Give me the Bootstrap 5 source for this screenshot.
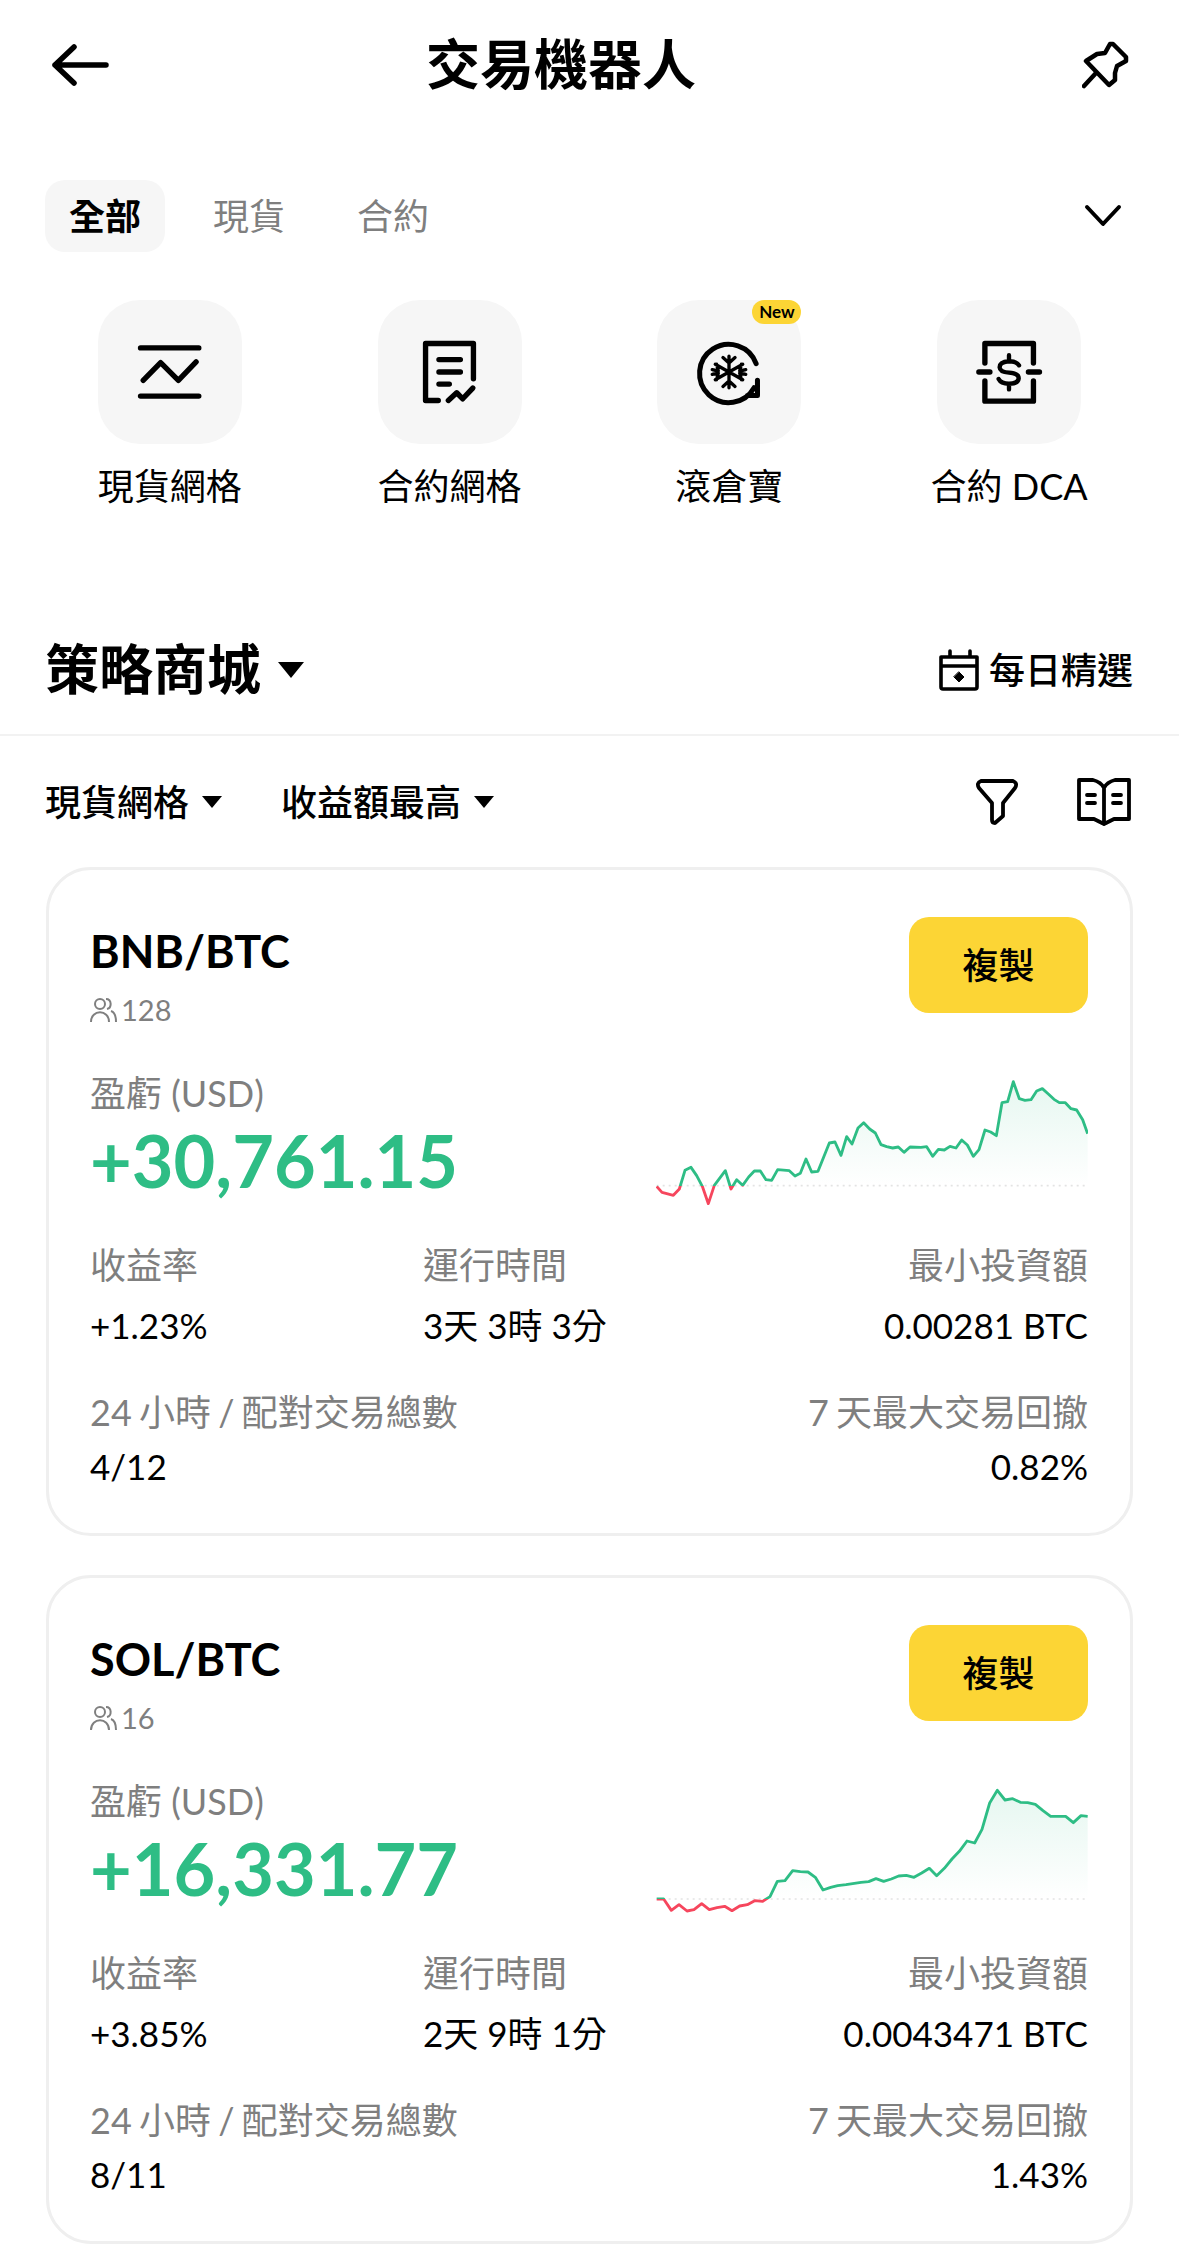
<!DOCTYPE html>
<html lang="zh-Hant">

<head>
  <meta charset="UTF-8" />
  <meta name="viewport" content="width=device-width, initial-scale=1" />
  <title>交易機器人</title>
  <link href="https://cdn.jsdelivr.net/npm/bootstrap@5.3.0/dist/css/bootstrap.min.css" rel="stylesheet">
  <style>
    body {
      font-family: Lato, "Noto Sans CJK TC", sans-serif;
      background-color: #fff;
      color: #000;
      width: 1179px;
      height: 2262px;
      overflow: hidden;
    }

    svg {
      display: block;
      flex: none;
    }

    .ink {
      fill: none;
      stroke: #000;
      stroke-linecap: round;
      stroke-linejoin: round;
    }

    .top-bar {
      height: 130px;
      padding: 0 43px 0 52px;
    }

    .top-title {
      font-size: 54px;
      font-weight: 700;
      line-height: 1;
      margin: 0 0 0 316px;
    }

    .tab-row {
      height: 72px;
      margin-top: 50px;
      padding: 0 57px 0 45px;
      font-size: 36px;
      color: #7f7f7f;
    }

    .tab-item {
      width: 120px;
      margin-right: 24px;
      height: 72px;
      line-height: 72px;
      border-radius: 20px;
      text-align: center;
    }

    .tab-item.on {
      background: #f6f6f6;
      color: #000;
      font-weight: 700;
    }

    .tool-row {
      margin-top: 48px;
      padding: 0 30px;
    }

    .tool-item {
      width: 280px;
    }

    .tool-tile {
      width: 144px;
      height: 144px;
      border-radius: 42px;
      background: #f6f6f6;
    }

    .new-tag {
      position: absolute;
      top: 0;
      right: 0;
      width: 49px;
      height: 24px;
      line-height: 23px;
      border-radius: 12px;
      background: #fcd535;
      font-size: 17px;
      font-weight: 700;
      text-align: center;
    }

    .tool-name {
      margin-top: 19px;
      font-size: 36px;
      line-height: 46px;
      white-space: nowrap;
    }

    .shop-head {
      margin-top: 129px;
      height: 64px;
      padding: 0 46px 0 45px;
    }

    .shop-title {
      font-size: 54px;
      font-weight: 700;
      line-height: 64px;
      margin: 0;
    }

    .daily-link {
      font-size: 36px;
      font-weight: 500;
    }

    .shop-line {
      height: 2px;
      margin-top: 32px;
      background: #f2f2f2;
    }

    .filter-row {
      height: 131px;
      padding: 0 48px 0 45px;
      font-size: 36px;
      font-weight: 500;
    }

    .caret-a {
      margin: 0 58px 0 12px;
    }

    .caret-b {
      margin-left: 12px;
    }

    .filter-icon {
      margin-left: auto;
      margin-right: 10px;
    }

    .bot-card {
      width: 1087px;
      height: 669px;
      margin: 0 46px 39px;
      padding: 47px 42px 0 41px;
      border: 3px solid #efefef;
      border-radius: 45px;
    }

    .pair-name {
      font-size: 45px;
      font-weight: 700;
      line-height: 54px;
      margin: 7px 0 0;
    }

    .pair-users {
      margin-top: 17px;
      color: #7f7f7f;
      font-size: 29px;
      line-height: 30px;
    }

    .copy-btn {
      width: 179px;
      height: 96px;
      border: 0;
      border-radius: 20px;
      background: #fcd535;
      color: #000;
      font-size: 36px;
      font-weight: 500;
    }

    .pnl-box {
      margin-top: 46px;
      height: 137px;
    }

    .pnl-chart {
      margin-top: 2px;
    }

    .gray-label {
      color: #7f7f7f;
      font-size: 36px;
      line-height: 44px;
      white-space: nowrap;
    }

    .pnl-value {
      color: #2ebd85;
      font-size: 72px;
      font-weight: 700;
      line-height: 84px;
      margin-top: 3px;
    }

    .stat-row {
      margin-top: 35px;
    }

    .stat-row.last {
      margin-top: 44px;
    }

    .stat-row.last .gray-label {
      word-spacing: -2px;
    }

    .stat-first {
      width: 333px;
    }

    .stat-value {
      font-size: 35px;
      line-height: 42px;
      margin-top: 17px;
      white-space: nowrap;
    }

    .last .stat-value {
      margin-top: 11px;
    }
  </style>
</head>

<body>
  <header class="top-bar d-flex align-items-center">
    <svg class="ink" width="58" height="44" viewBox="0 0 58 44" stroke-width="5.5">
      <path d="M22 4 3 22 22 40M3 22H54" />
    </svg>
    <h1 class="top-title">交易機器人</h1>
    <svg class="ink ms-auto" width="54" height="52" viewBox="22 9 54 52" stroke-width="4.5">
      <path d="M26 31 37 24 45 23 50 14 53 14 66 27 66 31 57 36 55 43 55 50 49 55ZM36 43 24 56" />
    </svg>
  </header>

  <div class="tab-row d-flex align-items-center">
    <div class="tab-item on">全部</div>
    <div class="tab-item">現貨</div>
    <div class="tab-item">合約</div>
    <svg class="ink ms-auto" width="38" height="24" viewBox="0 0 38 24" stroke-width="4">
      <path d="M3 3 19 20 35 3" />
    </svg>
  </div>

  <div class="tool-row d-flex">
    <div class="tool-item d-flex flex-column align-items-center">
      <div class="tool-tile">
        <svg class="ink" width="144" height="144" viewBox="115 60 430 430" stroke-width="16">
          <path d="M242 203H416M242 347H416M250 300 302 247 355 300 408 245" />
        </svg>
      </div>
      <div class="tool-name">現貨網格</div>
    </div>
    <div class="tool-item d-flex flex-column align-items-center">
      <div class="tool-tile">
        <svg class="ink" width="144" height="144" viewBox="955 60 430 430" stroke-width="16">
          <path d="M1135 360H1097V190H1240V295M1137 238H1201M1137 275H1201M1137 311H1168M1165 360 1190 337 1208 355 1238 323" />
        </svg>
      </div>
      <div class="tool-name">合約網格</div>
    </div>
    <div class="tool-item d-flex flex-column align-items-center">
      <div class="tool-tile position-relative">
        <svg class="ink" width="144" height="144" viewBox="115 60 430 430" stroke-width="15">
          <path d="M411 250A87 87 0 1 0 405 322M415 300V345H385" />
          <path d="M330 228V322M289 252 371 298M289 298 371 252M312 232 330 248 348 232M312 318 330 302 348 318M280 268 298 272 293 252M380 282 362 278 367 298M280 282 298 278 293 298M380 268 362 272 367 252" stroke-width="10" />
        </svg>
        <span class="new-tag">New</span>
      </div>
      <div class="tool-name">滾倉寶</div>
    </div>
    <div class="tool-item d-flex flex-column align-items-center">
      <div class="tool-tile">
        <svg class="ink" width="144" height="144" viewBox="952 60 430 430" stroke-width="16">
          <path d="M1095 248V190H1240V248M1095 302V362H1240V302M1077 275H1110M1225 275H1258" />
          <path d="M1197 255Q1190 243 1167 243 1139 245 1139 261 1140 275 1167 277 1196 279 1196 294 1194 310 1167 310 1143 310 1136 296M1167 225V243M1167 310V327" stroke-width="13" />
        </svg>
      </div>
      <div class="tool-name">合約 DCA</div>
    </div>
  </div>

  <div class="shop-head d-flex align-items-center justify-content-between">
    <div class="d-flex align-items-center gap-3">
      <h2 class="shop-title">策略商城</h2>
      <svg width="28" height="18" viewBox="0 0 28 18"><path d="M1 1H27L14 17Z" /></svg>
    </div>
    <div class="daily-link d-flex align-items-center gap-2">
      <svg class="ink" width="44" height="44" viewBox="0 0 44 44" stroke-width="3.6">
        <path d="M4 9H40V39Q40 41 38 41H6Q4 41 4 39ZM4 18H40M13 3V9M33 3V9" />
        <path d="M22 24 27 29 22 34 17 29Z" fill="#000" stroke-width="1" />
      </svg>
      <span>每日精選</span>
    </div>
  </div>
  <div class="shop-line"></div>

  <div class="filter-row d-flex align-items-center">
    <span>現貨網格</span>
    <svg class="caret-a" width="22" height="14" viewBox="0 0 22 14"><path d="M1 1H21L11 13Z" /></svg>
    <span>收益額最高</span>
    <svg class="caret-b" width="22" height="14" viewBox="0 0 22 14"><path d="M1 1H21L11 13Z" /></svg>
    <svg class="ink filter-icon" width="44" height="48" viewBox="0 0 44 48" stroke-width="3.8">
      <path d="M6 3H38Q43 5 40 10L28 25V38L20 45Q17 45 17 42V25L4 10Q1 5 6 3Z" />
    </svg>
    <svg class="ink ms-5" width="54" height="50" viewBox="0 0 54 50" stroke-width="3.8">
      <path d="M2 3H16Q24 5 27 11 30 5 38 3H52V42H37L27 47 17 42H2ZM27 11V46M10 18H18M10 26H18M36 18H44M36 26H44" />
    </svg>
  </div>

  <section class="bot-card">
    <div class="d-flex justify-content-between">
      <div>
        <h3 class="pair-name">BNB/BTC</h3>
        <div class="pair-users d-flex align-items-center">
          <svg class="me-1" width="27" height="25" viewBox="0 0 27 25" fill="none" stroke="#7f7f7f" stroke-width="2"><circle cx="10" cy="6" r="5" /><path d="M1 24C1 11 19 11 19 24M16 1C22 1 22 10 17 11M21 13C24 14 26 18 26 24" /></svg>
          <span>128</span>
        </div>
      </div>
      <button class="copy-btn" type="button">複製</button>
    </div>
    <div class="pnl-box d-flex justify-content-between">
      <div>
        <div class="gray-label">盈虧 (USD)</div>
        <div class="pnl-value">+30,761.15</div>
      </div>
      <svg class="pnl-chart" width="432" height="134" viewBox="110 100 1296 402">
        <defs>
          <linearGradient id="line1" gradientUnits="userSpaceOnUse" x1="0" y1="0" x2="0" y2="600">
            <stop offset="0.73" stop-color="#2ebd85" /><stop offset="0.73" stop-color="#f6465d" />
          </linearGradient>
          <linearGradient id="fill1" gradientUnits="userSpaceOnUse" x1="0" y1="126" x2="0" y2="438">
            <stop offset="0" stop-color="#2ebd85" stop-opacity="0.12" /><stop offset="1" stop-color="#2ebd85" stop-opacity="0" />
          </linearGradient>
          <clipPath id="clip1"><rect x="110" y="100" width="1302" height="338" /></clipPath>
        </defs>
        <polygon clip-path="url(#clip1)" fill="url(#fill1)" points="112,438 112,440 128,458 162,467 180,448 197,392 215,383 232,408 249,440 267,492 285,437 318,393 335,448 352,420 370,437 388,412 405,394 423,394 440,420 457,422 475,390 510,393 527,409 543,401 560,358 577,397 596,395 630,310 647,307 665,347 682,291 698,313 716,265 733,249 751,268 768,280 785,315 802,321 820,325 837,322 854,338 872,322 905,323 922,321 940,350 957,329 975,331 992,320 1010,325 1027,301 1044,316 1062,350 1079,330 1097,271 1114,277 1131,288 1148,189 1165,186 1182,126 1200,177 1217,182 1235,180 1252,154 1269,147 1287,163 1304,179 1320,189 1338,189 1355,207 1372,211 1390,240 1405,282 1405,438" />
        <path d="M112 438H1405" stroke="#e3e3e3" stroke-width="5" stroke-dasharray="6 12" />
        <polyline fill="none" stroke="url(#line1)" stroke-width="8.5" stroke-linejoin="round" points="112,440 128,458 162,467 180,448 197,392 215,383 232,408 249,440 267,492 285,437 318,393 335,448 352,420 370,437 388,412 405,394 423,394 440,420 457,422 475,390 510,393 527,409 543,401 560,358 577,397 596,395 630,310 647,307 665,347 682,291 698,313 716,265 733,249 751,268 768,280 785,315 802,321 820,325 837,322 854,338 872,322 905,323 922,321 940,350 957,329 975,331 992,320 1010,325 1027,301 1044,316 1062,350 1079,330 1097,271 1114,277 1131,288 1148,189 1165,186 1182,126 1200,177 1217,182 1235,180 1252,154 1269,147 1287,163 1304,179 1320,189 1338,189 1355,207 1372,211 1390,240 1405,282" />
      </svg>
    </div>
    <div class="stat-row d-flex">
      <div class="stat-first">
        <div class="gray-label">收益率</div>
        <div class="stat-value">+1.23%</div>
      </div>
      <div>
        <div class="gray-label">運行時間</div>
        <div class="stat-value">3天 3時 3分</div>
      </div>
      <div class="ms-auto text-end">
        <div class="gray-label">最小投資額</div>
        <div class="stat-value">0.00281 BTC</div>
      </div>
    </div>
    <div class="stat-row last d-flex justify-content-between">
      <div>
        <div class="gray-label">24 小時 / 配對交易總數</div>
        <div class="stat-value">4/12</div>
      </div>
      <div class="text-end">
        <div class="gray-label">7 天最大交易回撤</div>
        <div class="stat-value">0.82%</div>
      </div>
    </div>
  </section>

  <section class="bot-card">
    <div class="d-flex justify-content-between">
      <div>
        <h3 class="pair-name">SOL/BTC</h3>
        <div class="pair-users d-flex align-items-center">
          <svg class="me-1" width="27" height="25" viewBox="0 0 27 25" fill="none" stroke="#7f7f7f" stroke-width="2"><circle cx="10" cy="6" r="5" /><path d="M1 24C1 11 19 11 19 24M16 1C22 1 22 10 17 11M21 13C24 14 26 18 26 24" /></svg>
          <span>16</span>
        </div>
      </div>
      <button class="copy-btn" type="button">複製</button>
    </div>
    <div class="pnl-box d-flex justify-content-between">
      <div>
        <div class="gray-label">盈虧 (USD)</div>
        <div class="pnl-value">+16,331.77</div>
      </div>
      <svg class="pnl-chart" width="432" height="134" viewBox="110 33 1296 402">
        <defs>
          <linearGradient id="line2" gradientUnits="userSpaceOnUse" x1="0" y1="0" x2="0" y2="600">
            <stop offset="0.645" stop-color="#2ebd85" /><stop offset="0.645" stop-color="#f6465d" />
          </linearGradient>
          <linearGradient id="fill2" gradientUnits="userSpaceOnUse" x1="0" y1="61" x2="0" y2="387">
            <stop offset="0" stop-color="#2ebd85" stop-opacity="0.12" /><stop offset="1" stop-color="#2ebd85" stop-opacity="0" />
          </linearGradient>
          <clipPath id="clip2"><rect x="110" y="33" width="1302" height="354" /></clipPath>
        </defs>
        <polygon clip-path="url(#clip2)" fill="url(#fill2)" points="112,387 133,387 156,421 179,404 203,423 224,419 247,401 270,419 293,413 316,409 338,422 361,408 384,404 406,392 430,394 452,380 474,334 497,332 520,302 543,305 566,306 588,322 611,360 634,352 655,347 680,344 705,340 725,337 748,335 770,326 793,334 816,327 838,318 861,316 884,322 907,309 930,295 952,317 975,295 998,267 1020,244 1043,213 1066,219 1088,178 1111,99 1134,61 1157,90 1180,86 1203,97 1225,98 1248,103 1271,122 1294,139 1316,139 1339,139 1362,158 1385,137 1405,139 1405,387" />
        <path d="M112 387H1405" stroke="#e3e3e3" stroke-width="5" stroke-dasharray="6 12" />
        <polyline fill="none" stroke="url(#line2)" stroke-width="8.5" stroke-linejoin="round" points="112,387 133,387 156,421 179,404 203,423 224,419 247,401 270,419 293,413 316,409 338,422 361,408 384,404 406,392 430,394 452,380 474,334 497,332 520,302 543,305 566,306 588,322 611,360 634,352 655,347 680,344 705,340 725,337 748,335 770,326 793,334 816,327 838,318 861,316 884,322 907,309 930,295 952,317 975,295 998,267 1020,244 1043,213 1066,219 1088,178 1111,99 1134,61 1157,90 1180,86 1203,97 1225,98 1248,103 1271,122 1294,139 1316,139 1339,139 1362,158 1385,137 1405,139" />
      </svg>
    </div>
    <div class="stat-row d-flex">
      <div class="stat-first">
        <div class="gray-label">收益率</div>
        <div class="stat-value">+3.85%</div>
      </div>
      <div>
        <div class="gray-label">運行時間</div>
        <div class="stat-value">2天 9時 1分</div>
      </div>
      <div class="ms-auto text-end">
        <div class="gray-label">最小投資額</div>
        <div class="stat-value">0.0043471 BTC</div>
      </div>
    </div>
    <div class="stat-row last d-flex justify-content-between">
      <div>
        <div class="gray-label">24 小時 / 配對交易總數</div>
        <div class="stat-value">8/11</div>
      </div>
      <div class="text-end">
        <div class="gray-label">7 天最大交易回撤</div>
        <div class="stat-value">1.43%</div>
      </div>
    </div>
  </section>

  <script src="https://cdn.jsdelivr.net/npm/bootstrap@5.3.0/dist/js/bootstrap.bundle.min.js"></script>
</body>

</html>
